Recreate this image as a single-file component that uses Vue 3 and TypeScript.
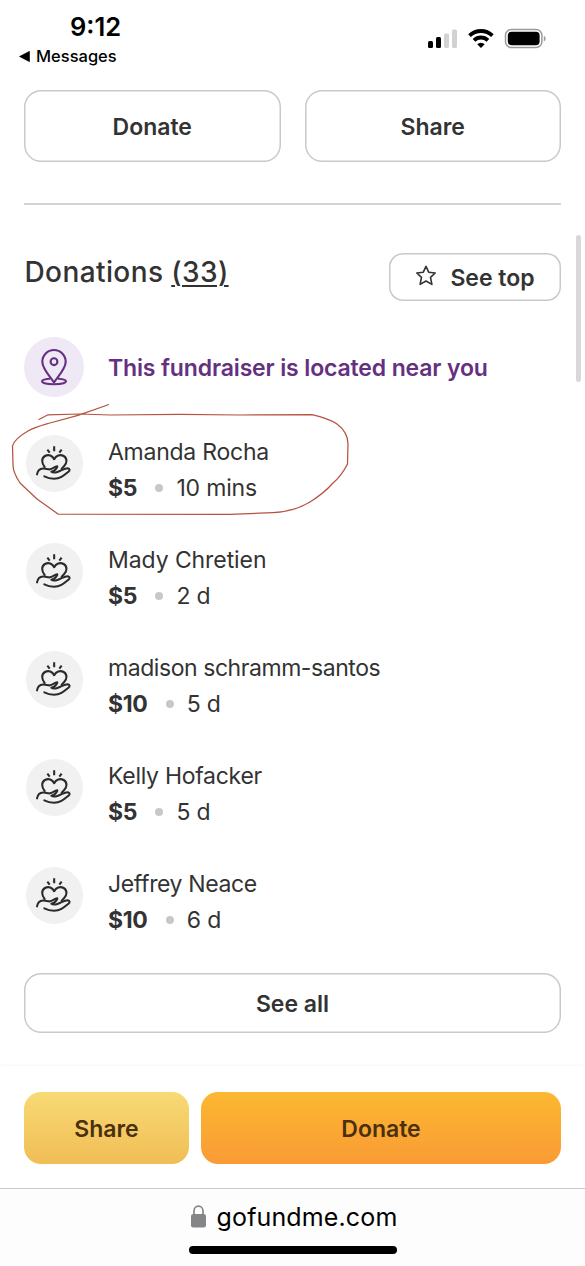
<script setup lang="ts">
interface Donation {
  name: string
  amount: string
  age: string
  spacing: string
}

const donations: Donation[] = [
  { name: 'Amanda Rocha', amount: '$5', age: '10 mins', spacing: 'n0' },
  { name: 'Mady Chretien', amount: '$5', age: '2 d', spacing: 'n1' },
  { name: 'madison schramm-santos', amount: '$10', age: '5 d', spacing: 'n2' },
  { name: 'Kelly Hofacker', amount: '$5', age: '5 d', spacing: 'n3' },
  { name: 'Jeffrey Neace', amount: '$10', age: '6 d', spacing: 'n4' },
]
</script>

<template>
  <div class="page">
    <header class="status">
      <div class="status-left">
        <div class="time">9:12</div>
        <div class="back">
          <svg width="11" height="11" viewBox="0 0 11 11"><path d="M.5 5.5 10.5.3v10.4z" fill="#000" stroke="#000" stroke-width=".6" stroke-linejoin="round" /></svg>
          <span>Messages</span>
        </div>
      </div>
      <svg class="status-icons" width="120" height="22" viewBox="0 0 120 22">
        <rect x="0" y="13" width="5" height="7" rx="1.5" />
        <rect x="8" y="9" width="5" height="11" rx="1.5" />
        <rect x="16" y="5.500" width="5" height="14.500" rx="1.5" fill="#d2d2d2" />
        <rect x="24" y="1.500" width="5" height="18.500" rx="1.5" fill="#d2d2d2" />
        <g fill="none" stroke="#000" stroke-width="3.800">
          <path d="M41.500 7.600a16.500 16.500 0 0 1 22.900 0" />
          <path d="M46 12.300a10 10 0 0 1 13.900 0" />
        </g>
        <path d="M52.950 19.900 49.200 16.300a5.400 5.400 0 0 1 7.500 0z" />
        <rect x="77.500" y="1.500" width="36.400" height="18" rx="5.800" fill="none" stroke="#9b9b9b" stroke-width="1.500" />
        <rect x="79.800" y="3.800" width="31.800" height="13.400" rx="3.600" />
        <path d="M115.800 7.700c2.400 1 2.400 4.800 0 5.800z" fill="#9b9b9b" />
      </svg>
    </header>

    <main>
      <div class="actions">
        <button class="outline">Donate</button>
        <button class="outline">Share</button>
      </div>
      <div class="rule"></div>
      <div class="section-head">
        <h2>Donations <span class="count">(33)</span></h2>
        <button class="outline top">
          <svg width="22" height="22" viewBox="0 0 22 22"><path d="M11 1.400 13.700 7.200 20.200 8 15.500 12.300 16.900 19.400 11 16 5.100 19.400 6.500 12.300 1.800 8 8.300 7.200z" fill="none" stroke="#333" stroke-width="1.600" stroke-linejoin="round" /></svg>
          <span>See top</span>
        </button>
      </div>
      <div class="near">
        <div class="pin">
          <svg width="60" height="60" viewBox="0 0 60 60" fill="none" stroke="#653080" stroke-width="2.100" stroke-linejoin="round" stroke-linecap="round">
            <path d="M30 45.500C27 40.500 18.300 32 18.300 24.700a11.700 11.700 0 0 1 23.400 0C41.700 32 33 40.500 30 45.500z" />
            <circle cx="30" cy="24.700" r="3.400" />
            <path d="M25.500 41.700c-4.600.400-7.500 1.400-7.500 2.600 0 1.700 5.400 3 12 3s12-1.300 12-3c0-1.200-2.900-2.200-7.500-2.600" />
          </svg>
        </div>
        <span>This fundraiser is located near you</span>
      </div>
      <ul class="list">
        <li v-for="d in donations" :key="d.name">
          <svg class="avatar" width="57" height="57" viewBox="77 119 171 171">
            <circle cx="162.500" cy="204.500" r="85.500" fill="#f1f1f1" />
            <g fill="none" stroke="#2b2b2b" stroke-width="6.200" stroke-linecap="round" stroke-linejoin="round">
              <path d="M161.500 153v15M141 163l7 9M184 163l-7 9" stroke-linecap="butt" />
              <path d="M133 215C124 204 122 189 134 182C145 176 156 181 161.500 191.500C167 181 179 176 190 182C202 189 200 204 191 213L184 220" />
              <path d="M110 237C112 226 118 220 128 219.500C137 219 142 223 149 222C157 220 163 214 171 213C171 220 162 227 153 229C158 233 165 232 171 230C183 226 192 219 202 218.500C209 220 209 225 205 228.500C191 240 181 250 161 250C149 250 141 248 132 243" />
            </g>
          </svg>
          <div>
            <div class="name" :class="d.spacing">{{ d.name }}</div>
            <div class="meta"><b>{{ d.amount }}</b><i></i><span>{{ d.age }}</span></div>
          </div>
        </li>
      </ul>
      <button class="outline all">See all</button>
    </main>

    <div class="sticky">
      <button class="share">Share</button>
      <button class="donate">Donate</button>
    </div>
    <footer>
      <div class="url">
        <svg width="15" height="23" viewBox="0 0 15 23"><rect x="0" y="9" width="15" height="13.500" rx="2.200" fill="#858587" /><path d="M3 10V6.200a4.500 5 0 0 1 9 0V10" fill="none" stroke="#858587" stroke-width="1.700" /></svg>
        <span>gofundme.com</span>
      </div>
      <div class="home"></div>
    </footer>

    <div class="scrollbar"></div>
    <svg class="scribble" width="345" height="120" viewBox="8 398 345 120">
      <path d="M38.500 419.800L48 414.800L80 414L110 415L180 414.300L240 415L312 414.700C322 417 331 420 337 424C345 430 348 437 348 444L347.500 464C344 471 339 478 333 483C326 491 318 497 310 502C300 508 286 512 273 512.700L230 514.300L58 514L37 499L20 483C16 477 13 471 13 465L12.500 446C14 440 21 435 28 431C35 427 43 425 50 423L78 415.300L109 404.500" fill="none" stroke="#b55340" stroke-width="1.250" stroke-linejoin="round" />
    </svg>
  </div>
</template>

<style>
body { margin: 0; background: #fff; }
</style>

<style scoped>
.page { position: relative; width: 585px; height: 1266px; overflow: hidden; background: #fff; display: flex; flex-direction: column; font-family: Inter, "Liberation Sans", sans-serif; color: #333; }
button { font-family: inherit; color: inherit; padding: 2px 0 0; box-sizing: border-box; border: 0; display: flex; align-items: center; justify-content: center; font-size: 23px; font-weight: 600; }
.status { height: 90px; display: flex; justify-content: space-between; color: #000; flex: none; }
.time { font-size: 25.500px; font-weight: 600; line-height: 30px; padding: 12px 0 0 70px; }
.back { display: flex; align-items: center; gap: 6px; margin: 4px 0 0 19px; font-size: 16.500px; font-weight: 500; line-height: 20px; }
.status-icons { margin: 28px 37px 0 0; }
main { padding: 0 24px; height: 976px; flex: none; }
.actions { display: grid; grid-template-columns: 1fr 1fr; gap: 24px; }
.outline { height: 71.500px; box-shadow: inset 0 0 0 1.500px #c9c9c9; border-radius: 17px; background: #fff; }
.rule { height: 2px; background: #d3d3d3; margin-top: 41.500px; }
.section-head { display: flex; justify-content: space-between; margin-top: 48px; height: 84px; }
h2 { margin: 0 0 0 .500px; font-size: 28px; font-weight: 500; line-height: 38px; letter-spacing: .400px; }
.count { text-decoration: underline; text-decoration-thickness: 2px; text-underline-offset: 3px; }
.top { width: 172px; height: 48px; border-radius: 14px; gap: 13px; }
.top svg { margin-top: -5px; }
.near { display: flex; align-items: center; gap: 24px; height: 60px; color: #653080; font-size: 23px; font-weight: 600; letter-spacing: -.140px; }
.pin { width: 60px; height: 60px; border-radius: 50%; background: #efe9f5; }
.near span { padding-top: 2px; white-space: nowrap; }
.list { list-style: none; margin: 37px 0 0; padding: 0; }
li { height: 108px; display: flex; gap: 25.500px; padding-left: 1.500px; font-size: 23px; line-height: 36px; white-space: nowrap; }
.avatar { flex: none; margin-top: .500px; }
.n0 { letter-spacing: -.250px; }
.n1 { letter-spacing: -.080px; }
.n2 { letter-spacing: -.440px; }
.n3 { letter-spacing: -.280px; }
.n4 { letter-spacing: -.380px; }
.meta { display: flex; align-items: center; }
.meta b { font-weight: 700; letter-spacing: -.400px; }
.meta i { width: 8px; height: 8px; border-radius: 50%; background: #c8c8c8; margin: 0 13px 0 18.500px; }
.meta span { letter-spacing: -.200px; }
.all { width: 100%; height: 60px; margin-top: -1px; }
.sticky { box-sizing: border-box; height: 122px; padding: 26px 24px 0; display: flex; gap: 12px; flex: none; box-shadow: 0 -1px 3px rgba(0, 0, 0, .04); }
.sticky button { height: 72px; border-radius: 17px; color: #4b3010; }
.sticky .share { width: 165px; background: linear-gradient(#f8da74, #f1bd55); }
.sticky .donate { flex: 1; background: linear-gradient(#fcb831, #f99b35); }
footer { flex: 1; border-top: 1px solid #c9c9c9; background: #fdfdfd; color: #000; display: flex; flex-direction: column; align-items: center; }
.url { display: flex; align-items: center; gap: 11px; height: 57px; margin-left: 3px; font-size: 25px; letter-spacing: .130px; }
.url svg { margin-top: -2px; }
.url span { margin-top: -1px; }
.home { width: 208px; height: 8px; border-radius: 4px; background: #000; }
.scrollbar { position: absolute; left: 576px; top: 235px; width: 5px; height: 147px; border-radius: 3px; background: #d8d8d8; }
.scribble { position: absolute; left: 8px; top: 398px; pointer-events: none; }
</style>
